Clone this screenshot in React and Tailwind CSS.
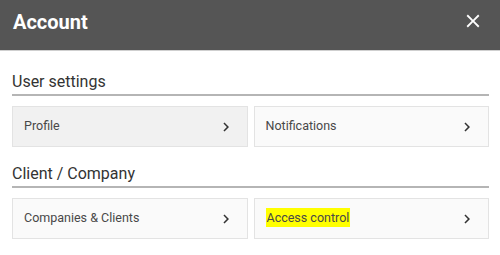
import React from "react";

function Chevron() {
  return (
    <svg width="18" height="18" viewBox="0 0 24 24" className="shrink-0" fill="#333333">
      <path d="M10 6L8.59 7.41 13.17 12l-4.58 4.59L10 18l6-6z" />
    </svg>
  );
}

function Card({ label, active, highlight }) {
  return (
    <div
      className={
        "h-[41px] flex items-center justify-between pl-[11px] pr-[12px] border border-[#e3e3e3] " +
        (active ? "bg-[#f1f1f1]" : "bg-[#fafafa]")
      }
    >
      <span className="text-[12.5px] text-[#484848]">
        {highlight ? <span className="bg-[#ffff00] px-[1px] py-[2px]">{label}</span> : label}
      </span>
      <Chevron />
    </div>
  );
}

function Section({ title, children, className }) {
  return (
    <div className={className}>
      <div className="text-[16px] leading-[20px] text-[#333333] pb-[2px] border-b-2 border-[#b5b5b5]">
        {title}
      </div>
      <div className="mt-[10px] grid grid-cols-2 gap-[6px]">{children}</div>
    </div>
  );
}

export default function App() {
  return (
    <div className="w-[500px] h-[255px] bg-white overflow-hidden" style={{ fontFamily: "Roboto, sans-serif" }}>
      <div className="h-[51px] bg-[#555555] border-b border-[#cfcfcf] flex items-start justify-between pl-[13px] pr-[16px] pt-[8px]">
        <span className="text-[20px] leading-[28px] font-bold text-white">Account</span>
        <svg width="22" height="22" viewBox="0 0 24 24" fill="#ffffff" className="mt-[2px]">
          <path d="M19 6.41L17.59 5 12 10.59 6.41 5 5 6.41 10.59 12 5 17.59 6.41 19 12 13.41 17.59 19 19 17.59 13.41 12z" />
        </svg>
      </div>
      <div className="pl-[12px] pr-[11px] pt-[21px]">
        <Section title="User settings">
          <Card label="Profile" active />
          <Card label="Notifications" />
        </Section>
        <Section title="Client / Company" className="mt-[17px]">
          <Card label="Companies & Clients" />
          <Card label="Access control" highlight />
        </Section>
      </div>
    </div>
  );
}
